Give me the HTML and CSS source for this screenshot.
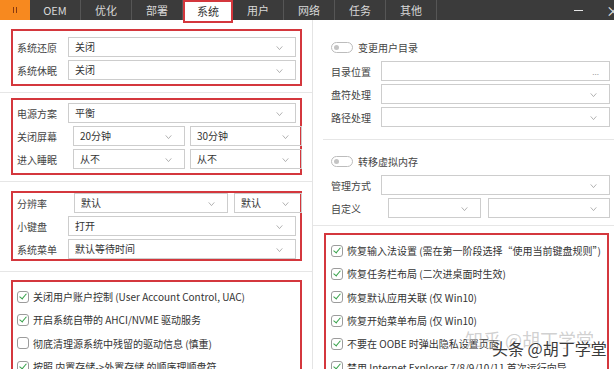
FILE: index.html
```html
<!DOCTYPE html>
<html lang="zh-CN">
  <head>
    <meta charset="UTF-8" />
    <title>系统</title>
    <link rel="stylesheet" href="styles.css">
  </head>
  <body>
    <div class="topbar">
      <div class="logo"><span></span><span></span></div>
      <div class="tab">OEM</div>
      <div class="tab">优化</div>
      <div class="tab">部署</div>
      <div class="tab active">系统</div>
      <div class="tab">用户</div>
      <div class="tab">网络</div>
      <div class="tab">任务</div>
      <div class="tab">其他</div>
      <div class="win-btns">
        <span class="min"></span>
        <span class="close">×</span>
      </div>
    </div>

    <div class="main">
      <div class="col-left">
        <div class="group g1">
          <div class="row">
            <span class="label">系统还原</span>
            <div class="select">关闭<svg class="arrow" viewBox="0 0 8 5"><path d="M0.5 0.5 L4 4.5 L7.5 0.5" /></svg></div>
          </div>
          <div class="row">
            <span class="label">系统休眠</span>
            <div class="select">关闭<svg class="arrow" viewBox="0 0 8 5"><path d="M0.5 0.5 L4 4.5 L7.5 0.5" /></svg></div>
          </div>
        </div>
        <div class="sep s1"></div>
        <div class="group g2">
          <div class="row">
            <span class="label">电源方案</span>
            <div class="select">平衡<svg class="arrow" viewBox="0 0 8 5"><path d="M0.5 0.5 L4 4.5 L7.5 0.5" /></svg></div>
          </div>
          <div class="row halves">
            <span class="label">关闭屏幕</span>
            <div class="select">20分钟<svg class="arrow" viewBox="0 0 8 5"><path d="M0.5 0.5 L4 4.5 L7.5 0.5" /></svg></div>
            <div class="select">30分钟<svg class="arrow" viewBox="0 0 8 5"><path d="M0.5 0.5 L4 4.5 L7.5 0.5" /></svg></div>
          </div>
          <div class="row halves">
            <span class="label">进入睡眠</span>
            <div class="select">从不<svg class="arrow" viewBox="0 0 8 5"><path d="M0.5 0.5 L4 4.5 L7.5 0.5" /></svg></div>
            <div class="select">从不<svg class="arrow" viewBox="0 0 8 5"><path d="M0.5 0.5 L4 4.5 L7.5 0.5" /></svg></div>
          </div>
        </div>
        <div class="sep s2"></div>
        <div class="group g3">
          <div class="row res">
            <span class="label">分辨率</span>
            <div class="select">默认<svg class="arrow" viewBox="0 0 8 5"><path d="M0.5 0.5 L4 4.5 L7.5 0.5" /></svg></div>
            <div class="select">默认<svg class="arrow" viewBox="0 0 8 5"><path d="M0.5 0.5 L4 4.5 L7.5 0.5" /></svg></div>
          </div>
          <div class="row">
            <span class="label">小键盘</span>
            <div class="select">打开<svg class="arrow" viewBox="0 0 8 5"><path d="M0.5 0.5 L4 4.5 L7.5 0.5" /></svg></div>
          </div>
          <div class="row">
            <span class="label">系统菜单</span>
            <div class="select">默认等待时间<svg class="arrow" viewBox="0 0 8 5"><path d="M0.5 0.5 L4 4.5 L7.5 0.5" /></svg></div>
          </div>
        </div>
        <div class="sep s3"></div>
        <div class="group checks g4">
          <div class="check on"><i class="box"></i>关闭用户账户控制 (User Account Control, UAC)</div>
          <div class="check on"><i class="box"></i>开启系统自带的 AHCI/NVME 驱动服务</div>
          <div class="check"><i class="box"></i>彻底清理源系统中残留的驱动信息 (慎重)</div>
          <div class="check on"><i class="box"></i>按照 内置存储-&gt;外置存储 的顺序理顺盘符</div>
        </div>
      </div>

      <div class="col-right">
        <div class="panel p1">
          <div class="toggle-row"><span class="toggle"></span>变更用户目录</div>
          <div class="row">
            <span class="label">目录位置</span>
            <div class="select"><span class="dots">...</span></div>
          </div>
          <div class="row">
            <span class="label">盘符处理</span>
            <div class="select"><svg class="arrow" viewBox="0 0 8 5"><path d="M0.5 0.5 L4 4.5 L7.5 0.5" /></svg></div>
          </div>
          <div class="row">
            <span class="label">路径处理</span>
            <div class="select"><svg class="arrow" viewBox="0 0 8 5"><path d="M0.5 0.5 L4 4.5 L7.5 0.5" /></svg></div>
          </div>
        </div>
        <div class="sep r1"></div>
        <div class="panel p2">
          <div class="toggle-row"><span class="toggle"></span>转移虚拟内存</div>
          <div class="row">
            <span class="label">管理方式</span>
            <div class="select"><svg class="arrow" viewBox="0 0 8 5"><path d="M0.5 0.5 L4 4.5 L7.5 0.5" /></svg></div>
          </div>
          <div class="row custom">
            <span class="label">自定义</span>
            <div class="select"><svg class="arrow" viewBox="0 0 8 5"><path d="M0.5 0.5 L4 4.5 L7.5 0.5" /></svg></div>
            <div class="select"><svg class="arrow" viewBox="0 0 8 5"><path d="M0.5 0.5 L4 4.5 L7.5 0.5" /></svg></div>
          </div>
        </div>
        <div class="sep r2"></div>
        <div class="group checks g5">
          <div class="check on"><i class="box"></i>恢复输入法设置 (需在第一阶段选择“使用当前键盘规则”)</div>
          <div class="check on"><i class="box"></i>恢复任务栏布局 (二次进桌面时生效)</div>
          <div class="check on"><i class="box"></i>恢复默认应用关联 (仅 Win10)</div>
          <div class="check on"><i class="box"></i>恢复开始菜单布局 (仅 Win10)</div>
          <div class="check on"><i class="box"></i>不要在 OOBE 时弹出隐私设置页面</div>
          <div class="check on"><i class="box"></i>禁用 Internet Explorer 7/8/9/10/11 首次运行向导</div>
        </div>
      </div>
    </div>

    <div class="wm wm-zhihu">知乎 @胡丁学堂</div>
    <div class="wm wm-toutiao">头条 @胡丁学堂</div>
  </body>
</html>
```

FILE: styles.css
```css
body {
  margin: 0;
  width: 614px;
  height: 369px;
  overflow: hidden;
  position: relative;
  background-color: #ffffff;
  font-family: "Noto Sans CJK SC", "Noto Sans", sans-serif;
  font-size: 10px;
  color: #333333;
}

/* top tab bar */
.topbar {
  display: flex;
  align-items: flex-start;
  height: 20px;
  background-color: #3b3b3b;
}

.logo {
  width: 30px;
  height: 20px;
  background-color: #f7891f;
  display: flex;
  justify-content: center;
  align-items: center;
  gap: 2px;
}

.logo span {
  width: 1px;
  height: 6px;
  background-color: #8a3a10;
}

.tab {
  width: 50px;
  height: 20px;
  line-height: 20px;
  text-align: center;
  color: #d8d8d8;
  font-size: 11px;
  border-right: 1px solid #565656;
}

.tab.active {
  position: relative;
  z-index: 1;
  height: 23px;
  box-sizing: border-box;
  line-height: 19px;
  background-color: #ffffff;
  color: #333333;
  border: 2px solid #d4373d;
}

.win-btns {
  margin-left: auto;
  display: flex;
  align-items: center;
  height: 20px;
}

.min {
  width: 9px;
  height: 1px;
  background-color: #e6e6e6;
  margin-right: 23px;
}

.close {
  color: #e6e6e6;
  font-size: 14px;
  width: 8px;
  overflow: hidden;
}

/* columns */
.main {
  display: grid;
  grid-template-columns: 313px 1fr;
}

.col-left {
  padding: 9px 10px 0 11px;
  border-right: 1px solid #e4e4e4;
  height: 400px;
}

.col-right {
  padding: 0 4px 0 11px;
}

.group {
  border: 2px solid #d4373d;
  padding: 0 4px;
}

.sep {
  height: 1px;
  background-color: #e6e6e6;
}

.g1 { padding-top: 6px; padding-bottom: 4px; }
.s1 { margin: 6px -10px 0 -11px; }
.g2 { margin-top: 5px; padding-top: 3px; padding-bottom: 4px; }
.s2 { margin: 6px -10px 0 -11px; }
.g3 { margin-top: 9px; padding-top: 0; padding-bottom: 0; }
.s3 { margin: 10px -10px 0 -11px; }
.g4 { margin-top: 8px; padding-top: 3px; }

/* form rows */
.row {
  display: grid;
  grid-template-columns: 51px 1fr;
  align-items: center;
  height: 20px;
  margin-bottom: 3px;
}

.row:last-child {
  margin-bottom: 0;
}

.row.halves {
  grid-template-columns: 51px 112px 112px;
  column-gap: 5px;
}

.row.res {
  grid-template-columns: 51px 154px 68px;
  column-gap: 6px;
}

.label {
  color: #444444;
  white-space: nowrap;
}

.select {
  position: relative;
  height: 20px;
  box-sizing: border-box;
  border: 1px solid #cdcdcd;
  padding-left: 6px;
  line-height: 18px;
  color: #333333;
}

.arrow {
  position: absolute;
  right: 12px;
  top: 8px;
  width: 7px;
  height: 4px;
  fill: none;
  stroke: #a0a0a0;
  stroke-width: 1;
}

.dots {
  position: absolute;
  right: 10px;
  top: 1px;
  color: #999999;
  font-size: 8px;
}

/* right panels */
.panel {
  padding-left: 7px;
}

.p1 { padding-top: 21px; }
.p2 { padding-top: 15px; }
.r1 { margin: 12px -4px 0 -1px; }
.r2 { margin: 7px -4px 0 -11px; }

.p1 .row,
.p2 .row {
  grid-template-columns: 50px 1fr;
}

.p2 .row.custom {
  grid-template-columns: 50px 93px 1fr;
  column-gap: 7px;
}

.toggle-row {
  display: flex;
  align-items: center;
  height: 12px;
  margin-bottom: 8px;
  color: #444444;
}

.toggle {
  position: relative;
  width: 20px;
  height: 9px;
  border: 1px solid #bcbcbc;
  border-radius: 6px;
  margin-right: 5px;
}

.toggle::after {
  content: "";
  position: absolute;
  left: 2px;
  top: 2px;
  width: 5px;
  height: 5px;
  border-radius: 50%;
  background-color: #c4c4c4;
}

/* checkbox lists */
.checks {
  padding-left: 4px;
}

.g5 {
  margin: 7px 1px 0 0;
  padding-top: 4px;
  padding-left: 5px;
}

.check {
  display: flex;
  align-items: center;
  height: 23.3px;
  white-space: nowrap;
  color: #333333;
}

.box {
  position: relative;
  width: 10px;
  height: 10px;
  border: 1px solid #9c9c9c;
  border-radius: 3px;
  margin-right: 4px;
  flex-shrink: 0;
}

.check.on .box::after {
  content: "";
  position: absolute;
  left: 3px;
  top: 0px;
  width: 3px;
  height: 6px;
  border-right: 1.5px solid #36a14a;
  border-bottom: 1.5px solid #36a14a;
  transform: rotate(40deg);
}

/* watermark */
.wm {
  position: absolute;
  white-space: nowrap;
}

.wm-zhihu {
  left: 465px;
  top: 326px;
  font-size: 18px;
  color: rgba(170, 170, 170, 0.55);
}

.wm-toutiao {
  left: 492px;
  top: 336px;
  font-size: 16px;
  color: #3a3a3a;
  text-shadow: 0 0 2px #ffffff, 0 0 2px #ffffff;
}
```
